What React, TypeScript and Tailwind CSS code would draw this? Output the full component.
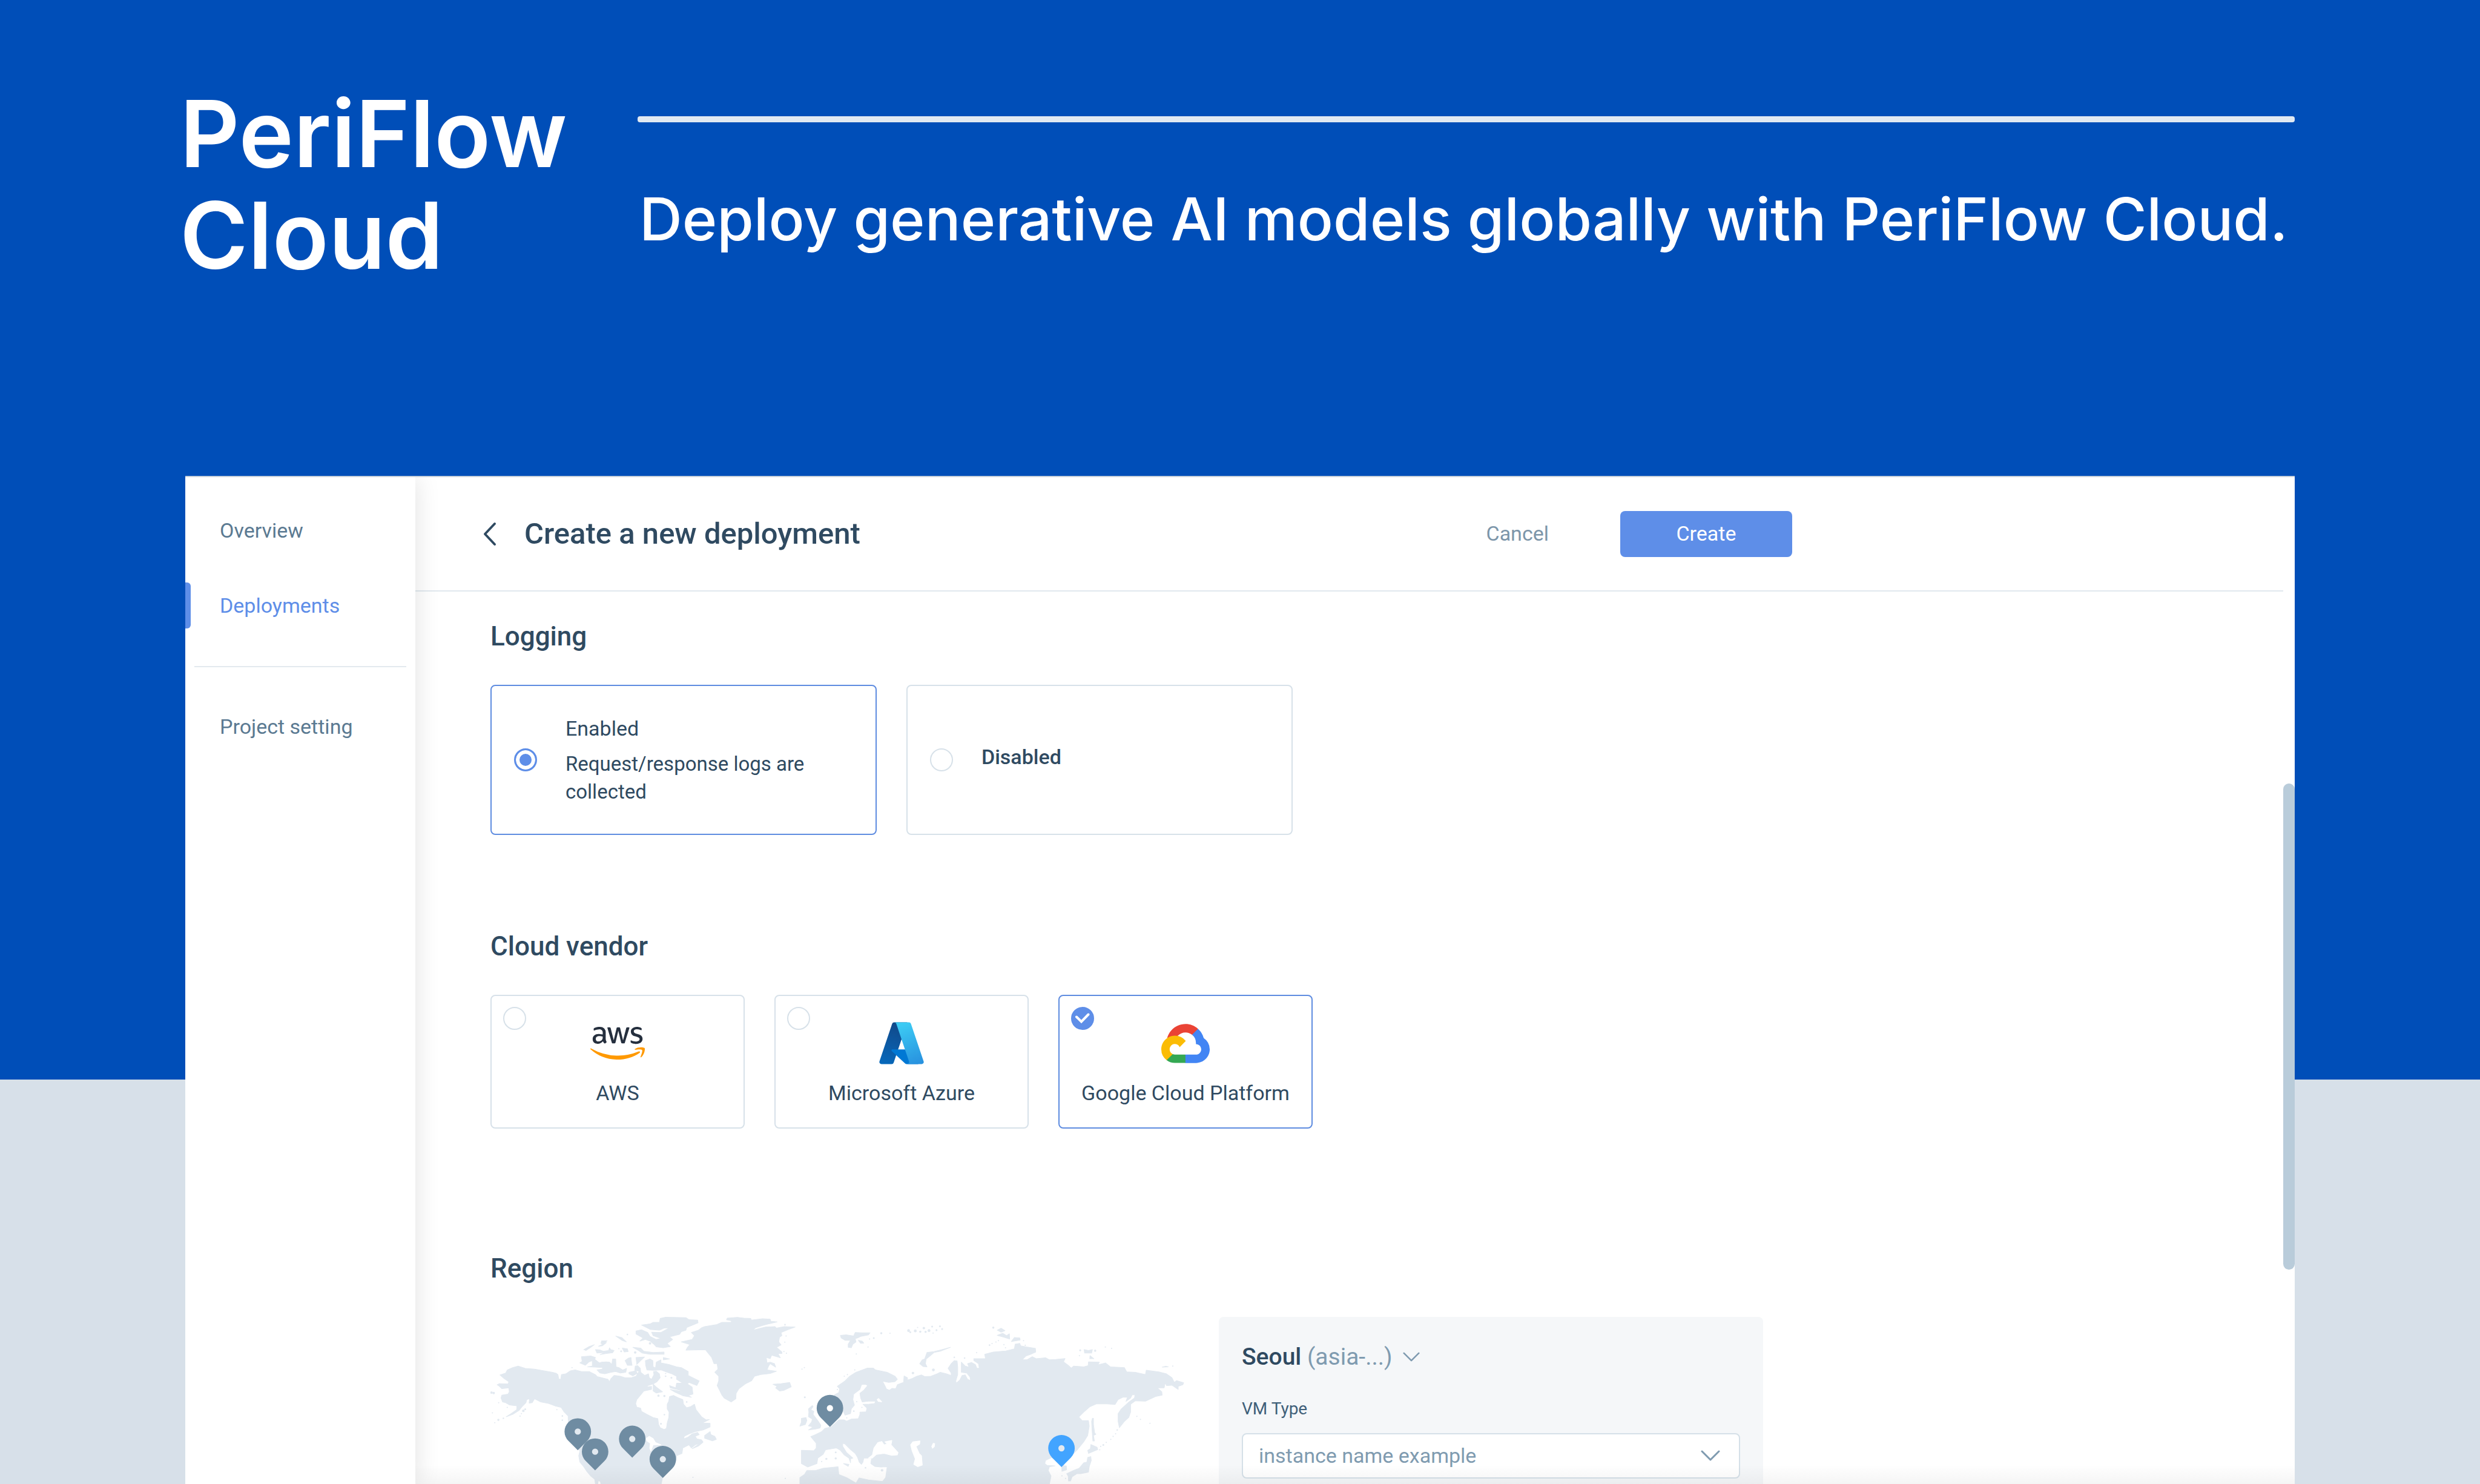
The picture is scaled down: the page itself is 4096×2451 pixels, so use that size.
import { useState } from "react";
import { FaAws } from "react-icons/fa";

/** Land outlines. Units are the ones of the map's own viewBox. */
const LAND = [
  // North America
  "M195,345 240,360 300,365 360,375 415,385 440,392 450,400 455,428 468,430 472,400 500,395 530,375 560,370 600,380 650,380 690,400 700,412 750,425 770,430 780,445 790,425 810,405 850,410 880,420 920,420 950,410 970,378 942,372 945,345 960,342 978,360 980,385 1005,405 1030,395 1035,420 1050,430 1065,400 1062,380 1080,378 1100,395 1105,420 1085,445 1060,460 1025,470 1020,478 1050,475 1050,495 1000,505 980,530 955,560 948,585 955,608 980,615 985,635 1020,655 1060,675 1090,682 1095,720 1105,740 1130,752 1145,745 1150,710 1160,675 1162,640 1150,620 1150,590 1160,570 1165,540 1190,533 1220,548 1250,560 1255,590 1275,612 1300,605 1325,590 1335,625 1370,670 1400,690 1420,688 1375,710 1425,712 1425,735 1380,755 1330,765 1290,780 1260,795 1255,812 1285,800 1310,780 1345,770 1355,785 1330,795 1340,812 1370,818 1380,832 1330,850 1305,870 1290,850 1250,870 1245,905 1210,920 1205,950 1180,985 1150,1030 1120,1060 1112,1101 725,1101 722,1085 708,1080 705,1101 690,1101 685,1070 660,1050 635,1020 615,990 590,960 583,920 590,890 570,850 530,760 516,720 515,665 490,640 470,610 430,600 390,585 340,575 300,555 285,580 265,583 268,555 250,560 245,580 220,605 200,630 160,655 118,670 150,650 185,625 187,600 140,595 115,580 95,575 85,550 90,532 130,525 138,510 135,485 90,490 75,475 60,465 75,458 130,460 135,445 105,425 78,402 115,390 125,370 160,355Z",
  // Arctic archipelago
  "M640,350 670,345 670,310 690,305 715,325 730,320 760,318 780,320 795,335 800,300 820,300 822,350 840,355 865,370 890,360 885,385 850,390 820,380 790,385 750,395 720,390 700,370 735,365 735,355 690,352Z",
  "M600,285 660,280 690,290 685,305 650,318 625,340 590,325 605,315Z",
  "M690,240 720,242 740,250 775,245 780,228 788,240 810,245 800,260 760,265 720,272 750,258 700,262Z",
  "M615,240 650,220 683,208 660,225 630,245ZM710,218 760,195 735,215ZM730,183 765,183 740,205 725,200ZM820,153 860,163 888,190 860,180Z",
  "M880,310 900,295 918,290 922,325 925,340 895,340ZM862,230 895,235 900,252 875,255ZM950,290 1005,287 980,310 955,335ZM905,385 950,375 958,392 930,408 905,395Z",
  "M930,225 980,230 1000,250 1060,258 1130,255 1130,270 1040,270 990,262 965,245ZM1125,290 1165,300 1125,305Z",
  "M1105,40 1140,32 1270,35 1290,48 1345,50 1348,68 1320,80 1275,98 1270,115 1240,125 1230,142 1165,158 1185,175 1150,200 1170,220 1125,228 1080,222 1065,205 1040,185 1010,175 975,185 995,165 950,140 950,120 985,112 1025,130 1040,155 1080,175 1110,168 1060,150 1050,128 1110,130 1165,100 1130,102 1100,115 1040,110 985,82 1040,75 1060,65 1100,65Z",
  "M1010,310 1040,300 1058,310 1060,350 1075,357 1080,320 1110,305 1110,325 1160,335 1210,350 1240,355 1285,380 1285,405 1355,440 1340,470 1290,450 1280,460 1310,480 1315,525 1280,535 1230,500 1170,485 1165,470 1205,485 1210,455 1250,455 1210,430 1210,410 1180,395 1150,385 1110,370 1060,372 1020,370 1012,340Z",
  "M1060,505 1060,460 1080,480 1120,510 1080,518ZM1170,495 1230,505 1305,545 1250,535 1200,512Z",
  "M1390,790 1425,765 1430,785 1455,795 1465,815 1440,825 1390,808ZM1310,875 1345,850 1378,835 1350,858Z",
  // Greenland, Iceland
  "M1500,65 1465,80 1430,85 1390,92 1370,100 1350,115 1305,130 1325,150 1310,175 1240,190 1295,208 1280,225 1270,243 1395,240 1415,265 1435,290 1450,330 1470,330 1475,365 1455,385 1480,410 1480,440 1470,470 1485,500 1500,530 1515,550 1560,575 1590,555 1592,520 1610,490 1650,460 1690,440 1710,410 1750,400 1810,393 1850,378 1790,370 1800,345 1810,330 1845,352 1838,330 1810,320 1790,325 1785,290 1810,298 1820,275 1875,292 1860,265 1885,265 1885,255 1850,225 1880,210 1865,190 1870,160 1885,150 1880,130 1930,110 1970,95 1900,92 1850,102 1840,92 1780,95 1740,105 1700,115 1715,100 1760,85 1800,75 1855,62 1815,58 1810,45 1760,42 1690,50 1685,40 1640,38 1600,33 1535,38 1530,48 1562,55 1560,65Z",
  "M1828,462 1855,460 1880,458 1935,450 1945,478 1900,500 1870,505 1845,485 1855,475Z",
  // Svalbard, Novaya Zemlya
  "M2260,148 2300,145 2345,152 2355,130 2400,132 2450,132 2440,145 2390,155 2370,165 2355,170 2360,190 2340,205 2330,228 2310,225 2310,205 2325,180 2290,180 2265,165ZM2375,180 2400,185 2410,198 2390,200Z",
  "M2768,330 2785,305 2800,300 2815,258 2860,252 2900,242 2965,225 2900,250 2860,258 2835,280 2810,300 2805,330 2815,350 2790,348Z",
  // British Isles
  "M2055,620 2080,598 2085,605 2070,625 2090,635 2085,655 2115,695 2135,725 2130,742 2095,750 2055,755 2085,735 2055,728 2075,705 2080,685 2055,670 2058,640ZM2000,730 2010,705 2010,680 2040,675 2045,695 2035,720Z",
  // Eurasia and North Africa
  "M2433,358 2470,358 2485,370 2560,385 2610,410 2625,430 2610,445 2570,450 2530,442 2545,470 2555,492 2575,500 2590,488 2615,490 2625,465 2650,455 2665,450 2668,408 2690,420 2690,435 2720,425 2750,410 2780,402 2800,412 2840,410 2880,395 2900,385 2940,395 2970,405 2970,390 2950,360 2970,330 2990,310 3008,312 3012,350 3012,400 3000,440 3002,455 3025,435 3040,405 3060,402 3075,430 3095,438 3090,415 3070,390 3035,385 3035,320 3060,345 3085,352 3075,330 3100,322 3125,335 3135,360 3150,358 3145,330 3115,310 3115,298 3190,298 3185,270 3240,255 3320,248 3375,235 3380,205 3410,200 3415,215 3450,222 3510,232 3512,255 3480,270 3450,280 3425,305 3455,305 3490,285 3515,298 3575,292 3600,305 3640,303 3700,297 3690,318 3720,340 3740,358 3755,345 3820,350 3848,342 3850,318 3920,320 3910,338 3960,325 3990,350 4080,355 4095,382 4150,385 4215,400 4220,372 4300,382 4350,395 4385,420 4400,450 4415,438 4460,452 4455,465 4425,475 4425,495 4385,468 4350,470 4342,452 4335,485 4290,485 4320,510 4322,532 4280,540 4215,570 4150,568 4120,590 4120,640 4108,675 4080,700 4048,740 4040,700 4040,650 4060,620 4110,575 4145,550 4148,530 4130,530 4120,550 4090,572 4100,545 4070,545 4040,560 4020,592 3970,588 3900,588 3860,605 3820,640 3788,672 3810,695 3850,695 3855,730 3845,790 3820,830 3780,880 3765,895 3700,960 3690,985 3708,985 3710,1010 3680,1020 3678,985 3650,960 3615,930 3575,950 3570,970 3585,982 3635,985 3600,990 3592,1015 3610,1050 3600,1101 2000,1101 2000,1060 2030,1040 2045,1015 2100,1015 2150,1000 2245,990 2250,1040 2300,1060 2360,1095 2380,1062 2440,1075 2530,1085 2550,1060 2560,990 2520,992 2480,988 2455,970 2460,935 2410,935 2405,960 2395,975 2380,960 2370,930 2355,905 2325,880 2290,845 2275,840 2275,860 2300,900 2340,935 2325,940 2325,965 2315,935 2285,915 2260,885 2235,870 2165,882 2150,910 2115,935 2110,970 2050,992 2010,970 2010,885 2090,888 2105,870 2105,840 2070,797 2100,785 2140,765 2160,745 2200,735 2250,690 2285,690 2300,698 2330,685 2375,682 2385,655 2385,640 2425,638 2430,615 2405,590 2440,590 2480,585 2485,570 2440,570 2400,575 2390,550 2385,520 2410,500 2435,470 2420,462 2395,465 2385,495 2345,525 2340,560 2350,595 2330,620 2325,650 2290,660 2280,640 2250,600 2220,530 2250,515 2255,490 2240,475 2290,440 2320,410 2360,385 2400,370Z",
  // Siberian islands
  "M3265,115 3290,103 3315,118 3290,128ZM3265,148 3300,135 3325,150 3343,138 3345,172 3300,158ZM3355,188 3375,162 3410,165 3412,178ZM3822,240 3850,245 3875,240 3870,262 3825,262ZM3860,278 3885,298 3858,298ZM4322,352 4345,346 4362,350Z",
  // Sakhalin and Japan
  "M3875,680 3882,680 3882,720 3890,775 3898,782 3882,790 3888,825 3878,825 3872,740 3870,700ZM3865,848 3905,865 3910,880 3850,905 3845,885 3862,875Z",
  "M3865,925 3868,950 3855,990 3850,1025 3800,1035 3775,1035 3745,1055 3735,1082 3722,1082 3720,1050 3710,1035 3760,1012 3790,1000 3820,965 3840,960 3845,930Z",
  // Sicily
  "M2280,970 2315,975 2310,988Z",
].join("");

/** Great Lakes, Black Sea, Caspian Sea, Aral Sea and Lake Ladoga. */
const WATER = [
  "M1015,810 1035,795 1060,810 1075,835 1110,850 1060,850 1045,890 1038,870 1042,840 1020,825Z",
  "M2465,915 2475,870 2500,835 2525,828 2540,850 2560,845 2545,830 2590,822 2585,850 2630,900 2625,915 2590,918 2540,905 2490,912 2465,935 2440,935Z",
  "M2710,850 2725,830 2770,825 2768,845 2745,860 2765,905 2780,920 2785,980 2755,990 2730,975 2740,940 2720,890Z",
  "M2845,860 2855,840 2865,842 2862,862 2850,872ZM2495,560 2505,553 2525,574 2503,572Z",
].join("");

/** Small islands: x, y, radius. */
const ISLETS = [
  [24, 515, 8], [38, 518, 8], [68, 690, 7], [45, 708, 4], [100, 680, 5], [30, 645, 4], [70, 580, 4], [125, 610, 4],
  [228, 632, 8], [240, 622, 6], [216, 650, 4], [207, 666, 4], [443, 625, 4], [478, 665, 5], [478, 692, 5], [540, 355, 4],
  [895, 143, 5], [945, 258, 8], [855, 250, 6], [840, 234, 4], [1140, 410, 5], [1140, 393, 4], [1177, 420, 6],
  [1315, 1058, 4], [1094, 535, 7], [1132, 537, 7], [1132, 657, 5], [1110, 715, 6], [1275, 575, 5], [1040, 200, 8],
  [1063, 197, 8], [1905, 80, 5], [1904, 192, 4], [1912, 152, 4], [1898, 252, 4], [1914, 263, 4], [2014, 365, 4], [2029, 355, 4],
  [2285, 410, 4], [2305, 400, 4], [2352, 370, 4], [2241, 496, 4], [2534, 610, 4], [2032, 545, 6], [2362, 268, 4],
  [2437, 223, 4], [2447, 172, 4], [2474, 166, 6], [2522, 135, 7], [2578, 135, 4], [2697, 118, 9], [2708, 128, 6],
  [2740, 120, 9], [2755, 98, 4], [2772, 125, 7], [2795, 102, 8], [2806, 126, 7], [2828, 118, 9], [2848, 92, 6],
  [2854, 134, 4], [2876, 115, 6], [2898, 90, 6], [2912, 108, 6], [2990, 289, 5], [2725, 390, 8], [2856, 370, 9],
  [2230, 898, 6], [2230, 937, 7], [2170, 940, 7], [2140, 957, 4], [2527, 1013, 8], [2421, 997, 5], [2346, 634, 5],
  [2398, 610, 4], [2365, 573, 4], [2301, 677, 4], [1907, 1065, 4], [3056, 294, 5], [3133, 259, 4], [3216, 211, 5],
  [3232, 201, 4], [3257, 191, 4], [3273, 182, 4], [3308, 208, 4], [3318, 228, 4], [3240, 99, 7], [3434, 182, 4],
  [3445, 212, 4], [3797, 244, 6], [3792, 278, 4], [3893, 247, 7], [3958, 223, 4], [3998, 232, 4], [4390, 345, 4],
  [3680, 1049, 4], [3703, 1065, 4], [4160, 667, 4], [4183, 687, 4], [4244, 712, 4], [4034, 755, 5], [4024, 779, 4],
  [4008, 796, 4], [3993, 815, 4], [3964, 834, 4], [3945, 851, 6], [3928, 860, 4], [3922, 882, 4],
];

const PINS = [
  { id: "us-west1", x: 577, y: 765 },
  { id: "us-west2", x: 688, y: 894 },
  { id: "us-central1", x: 926, y: 812 },
  { id: "us-east1", x: 1122, y: 942 },
  { id: "europe-west4", x: 2193, y: 615 },
  { id: "asia-northeast3", x: 3677, y: 872, active: true },
];

function RegionMap() {
  return (
    <svg viewBox="20 30 4480 1071" className="h-[276px] w-[1156px] shrink-0" role="img" aria-label="Region map">
      <path d={LAND} fill="#e2e9f0" stroke="#e2e9f0" strokeWidth="4" strokeLinejoin="round" />
      {ISLETS.map(([x, y, r]) => (
        <circle key={`${x}-${y}`} cx={x} cy={y} r={r} fill="#e2e9f0" />
      ))}
      <path d={WATER} fill="#fff" stroke="#fff" strokeWidth="4" strokeLinejoin="round" />
      {PINS.map((pin) => (
        <path
          key={pin.id}
          transform={`translate(${pin.x} ${pin.y})`}
          d="M0,120 -60,60A85,85 0 1 1 60,60ZM-20,0A20,20 0 1 0 20,0A20,20 0 1 0 -20,0Z"
          fillRule="evenodd"
          fill={pin.active ? "#42a4ff" : "#6f8ca2"}
        />
      ))}
    </svg>
  );
}

function AwsLogo() {
  return (
    <>
      <svg width="0" height="0" className="absolute" aria-hidden="true">
        <linearGradient id="aws-fill" x1="0" y1="0" x2="0" y2="1">
          <stop offset="0.57" stopColor="#252f3e" />
          <stop offset="0.57" stopColor="#ff9900" />
        </linearGradient>
      </svg>
      <FaAws className="h-[72px] w-[90px]" fill="url(#aws-fill)" aria-hidden="true" />
    </>
  );
}

function AzureLogo() {
  return (
    <svg viewBox="0 0 96 96" className="size-20" aria-hidden="true">
      <defs>
        <linearGradient id="azure-a" x1="-1032.172" x2="-1059.213" y1="145.312" y2="65.426" gradientTransform="matrix(1 0 0 -1 1075 158)" gradientUnits="userSpaceOnUse">
          <stop offset="0" stopColor="#114a8b" />
          <stop offset="1" stopColor="#0669bc" />
        </linearGradient>
        <linearGradient id="azure-b" x1="-1027.165" x2="-997.482" y1="147.642" y2="68.561" gradientTransform="matrix(1 0 0 -1 1075 158)" gradientUnits="userSpaceOnUse">
          <stop offset="0" stopColor="#3ccbf4" />
          <stop offset="1" stopColor="#2892df" />
        </linearGradient>
      </defs>
      <path fill="url(#azure-a)" d="M33.338 6.544h26.038l-27.03 80.087a4.152 4.152 0 0 1-3.933 2.824H8.149a4.145 4.145 0 0 1-3.928-5.47L29.404 9.368a4.152 4.152 0 0 1 3.934-2.825z" />
      <path fill="#0078d4" d="M71.175 60.261h-41.29a1.911 1.911 0 0 0-1.305 3.309l26.532 24.764a4.171 4.171 0 0 0 2.846 1.121h23.38z" />
      <path fill="url(#azure-b)" d="M66.595 9.364a4.145 4.145 0 0 0-3.928-2.82H33.648a4.146 4.146 0 0 1 3.928 2.82l25.184 74.62a4.146 4.146 0 0 1-3.928 5.472h29.02a4.146 4.146 0 0 0 3.927-5.472z" />
    </svg>
  );
}

function GoogleCloudLogo() {
  return (
    <svg viewBox="0 0 256 206" className="h-[65px] w-20" aria-hidden="true">
      <path fill="#ea4335" d="M170.252 56.819l22.253-22.253 1.483-9.37C153.437-11.677 88.976-7.496 52.42 33.92 42.267 45.423 34.734 59.764 30.717 74.573l7.97-1.123 44.505-7.34 3.436-3.513c19.797-21.742 53.27-24.667 76.128-6.168l7.496.39z" />
      <path fill="#4285f4" d="M224.205 73.918a100.249 100.249 0 0 0-30.217-48.722l-31.232 31.232a55.515 55.515 0 0 1 20.379 44.037v5.544c15.35 0 27.797 12.445 27.797 27.796 0 15.352-12.446 27.573-27.797 27.573h-55.671l-5.466 5.934v33.34l5.466 5.231h55.67c39.93.311 72.553-31.494 72.864-71.424a72.303 72.303 0 0 0-31.793-60.541" />
      <path fill="#34a853" d="M71.87 205.796h55.593V161.29H71.87a27.275 27.275 0 0 1-11.4-2.498l-7.887 2.42-22.409 22.253-1.952 7.574c12.567 9.489 27.9 14.825 43.647 14.757" />
      <path fill="#fbbc05" d="M71.87 61.425C31.94 61.664-.237 94.228.001 134.158a72.301 72.301 0 0 0 28.222 56.88l32.248-32.246c-13.99-6.322-20.208-22.786-13.887-36.776 6.32-13.99 22.786-20.208 36.775-13.888a27.796 27.796 0 0 1 13.887 13.888l32.248-32.248A72.224 72.224 0 0 0 71.87 61.425" />
    </svg>
  );
}

function ChevronDown({ className }: { className: string }) {
  return (
    <svg viewBox="0 0 32 18" className={className} fill="none" stroke="#7f9bb0" strokeWidth="3" strokeLinecap="round" strokeLinejoin="round" aria-hidden="true">
      <path d="M2,2 16,16 30,2" />
    </svg>
  );
}

const VENDORS = [
  { id: "aws", label: "AWS", Logo: AwsLogo },
  { id: "azure", label: "Microsoft Azure", Logo: AzureLogo },
  { id: "gcp", label: "Google Cloud Platform", Logo: GoogleCloudLogo },
];

const LOGGING = [
  { id: "enabled", label: "Enabled", description: "Request/response logs are collected" },
  { id: "disabled", label: "Disabled", description: "" },
];

const HEADING = "text-[44px] leading-[52px] font-medium text-[#2f4a61]";
const NAV_LINK = "flex h-[76px] items-center pl-[57px] text-[34px]";

function Hero() {
  return (
    <header className="flex pt-[137px] pr-[306px] pb-[313px] pl-[297px] font-[Inter,sans-serif] text-white">
      <h1 className="w-[756px] shrink-0 text-[153px] leading-[168px] font-semibold">
        PeriFlow
        <br />
        Cloud
      </h1>
      <div className="flex-1 pt-[55px]">
        <div className="h-[10px] rounded-[4px] bg-[#e0e9f2]" />
        <p className="mt-[104px] pl-[3px] text-[98px] leading-[112px] font-medium whitespace-nowrap">
          Deploy generative AI models globally with PeriFlow Cloud.
        </p>
      </div>
    </header>
  );
}

function Sidebar() {
  return (
    <nav className="z-10 w-[380px] shrink-0 bg-white pt-[50px] shadow-[0_0_40px_rgba(0,0,0,0.12)]">
      <a href="#overview" className={`${NAV_LINK} text-[#5b7a92]`}>
        Overview
      </a>
      <a href="#deployments" aria-current="page" className={`${NAV_LINK} relative mt-12 text-[#5e8ee8]`}>
        <span className="absolute inset-y-0 left-0 w-[9px] rounded-r-[6px] bg-[#5e8ee8]" />
        Deployments
      </a>
      <hr className="mx-[15px] mt-[62px] mb-[60px] border-t-2 border-[#e3e9ee]" />
      <a href="#project-setting" className={`${NAV_LINK} text-[#5b7a92]`}>
        Project setting
      </a>
    </nav>
  );
}

function TopBar() {
  return (
    <div className="mr-[19px] h-[189px] border-b-2 border-[#e0e8ee]">
      <div className="flex h-full max-w-[2274px] items-center pl-[112px]">
        <button type="button" aria-label="Back">
          <svg viewBox="0 0 22 40" className="h-10 w-[22px]" fill="none" stroke="#2f4a61" strokeWidth="4" strokeLinecap="round" strokeLinejoin="round">
            <path d="M19,3 3,20 19,37" />
          </svg>
        </button>
        <h2 className="ml-[46px] text-[49px] font-medium text-[#2f4a61]">Create a new deployment</h2>
        <button type="button" className="ml-auto text-[34px] text-[#7d96aa]">
          Cancel
        </button>
        <button type="button" className="ml-[118px] h-[76px] w-[284px] rounded-[8px] bg-[#5e8ee8] text-[34px] text-white">
          Create
        </button>
      </div>
    </div>
  );
}

function LoggingSection() {
  const [logging, setLogging] = useState("enabled");
  return (
    <section>
      <h3 className={HEADING}>Logging</h3>
      <div className="mt-[54px] flex gap-[49px]">
        {LOGGING.map((option) => (
          <label
            key={option.id}
            className="flex h-[248px] w-[638px] items-center gap-[47px] rounded-[8px] border-2 border-[#d7e1e9] px-[37px] text-[#2f4a61] has-checked:border-[#5e8ce0]"
          >
            <input
              type="radio"
              name="logging"
              checked={logging === option.id}
              onChange={() => setLogging(option.id)}
              className="size-[38px] shrink-0 appearance-none rounded-full border-2 border-[#d7e1e9] bg-white checked:border-[3px] checked:border-[#5e8ee8] checked:bg-[#5e8ee8] checked:shadow-[inset_0_0_0_6px_#fff]"
            />
            {option.description ? (
              <span className="flex flex-col gap-[13px] leading-[46px]">
                <span className="text-[34px]">{option.label}</span>
                <span className="text-[33px]">{option.description}</span>
              </span>
            ) : (
              <span className="pb-[10px] text-[34px] leading-[46px] font-medium">{option.label}</span>
            )}
          </label>
        ))}
      </div>
    </section>
  );
}

function VendorSection() {
  const [vendor, setVendor] = useState("gcp");
  return (
    <section className="mt-[158px]">
      <h3 className={HEADING}>Cloud vendor</h3>
      <div className="mt-[54px] flex gap-[49px]">
        {VENDORS.map(({ id, label, Logo }) => (
          <label
            key={id}
            className="relative flex h-[221px] w-[420px] flex-col items-center rounded-[8px] border-2 border-[#d7e1e9] pt-[38px] has-checked:border-[#5e8ce0]"
          >
            <input
              type="radio"
              name="vendor"
              checked={vendor === id}
              onChange={() => setVendor(id)}
              className="absolute top-[18px] left-[19px] size-[38px] appearance-none rounded-full border-2 border-[#d7e1e9] bg-white checked:border-[#5e8ee8] checked:bg-[#5e8ee8]"
            />
            {vendor === id && (
              <svg viewBox="0 0 38 38" className="pointer-events-none absolute top-[18px] left-[19px] size-[38px]" fill="none" stroke="#fff" strokeWidth="4" strokeLinecap="round" aria-hidden="true">
                <path d="M9,16.5 17,24.5 28.5,12.5" />
              </svg>
            )}
            <span className="flex h-20 items-center">
              <Logo />
            </span>
            <span className="mt-[22px] text-[34px] leading-10 text-[#2f4a61]">{label}</span>
          </label>
        ))}
      </div>
    </section>
  );
}

function RegionSection() {
  return (
    <section className="mt-[205px]">
      <h3 className={HEADING}>Region</h3>
      <div className="mt-[54px] flex gap-[47px]">
        <RegionMap />
        <div className="w-[899px] rounded-[8px] bg-[#f5f7f9] px-[38px] pt-[43px] pb-24">
          <button type="button" className="flex items-center gap-[17px] text-[39px] leading-[46px] font-medium text-[#2f4a61]">
            <span>
              Seoul <span className="font-normal text-[#7f9bb0]">(asia-...)</span>
            </span>
            <ChevronDown className="h-4 w-7" />
          </button>
          <label htmlFor="vm-type" className="mt-[46px] block text-[28px] leading-[34px] text-[#3f5f79]">
            VM Type
          </label>
          <div className="relative mt-[23px]">
            <select
              id="vm-type"
              defaultValue=""
              className="block h-[75px] w-full appearance-none rounded-[8px] border-2 border-[#d5e0e8] bg-white px-[26px] text-[34px] text-[#7f9bb0]"
            >
              <option value="">instance name example</option>
            </select>
            <ChevronDown className="pointer-events-none absolute top-[28px] right-[33px] h-[18px] w-8" />
          </div>
        </div>
      </div>
    </section>
  );
}

export default function App() {
  return (
    <div className="flex h-screen flex-col overflow-hidden bg-[linear-gradient(#004eb8_72.75%,#d7e0e9_72.75%)] font-[Roboto,sans-serif]">
      <Hero />
      <main className="relative mx-[306px] flex min-h-0 flex-1 overflow-hidden border-t-2 border-[#c9d2dc] bg-white">
        <Sidebar />
        <div className="min-w-0 flex-1">
          <TopBar />
          <div className="pt-12 pl-[124px]">
            <LoggingSection />
            <VendorSection />
            <RegionSection />
          </div>
        </div>
        {/* scrollbar thumb */}
        <div className="absolute top-[506px] right-0 h-[803px] w-[19px] rounded-full bg-[#b9ccda]" />
        <div className="pointer-events-none absolute inset-x-0 bottom-0 h-8 bg-linear-to-t from-black/4 to-transparent" />
      </main>
    </div>
  );
}
